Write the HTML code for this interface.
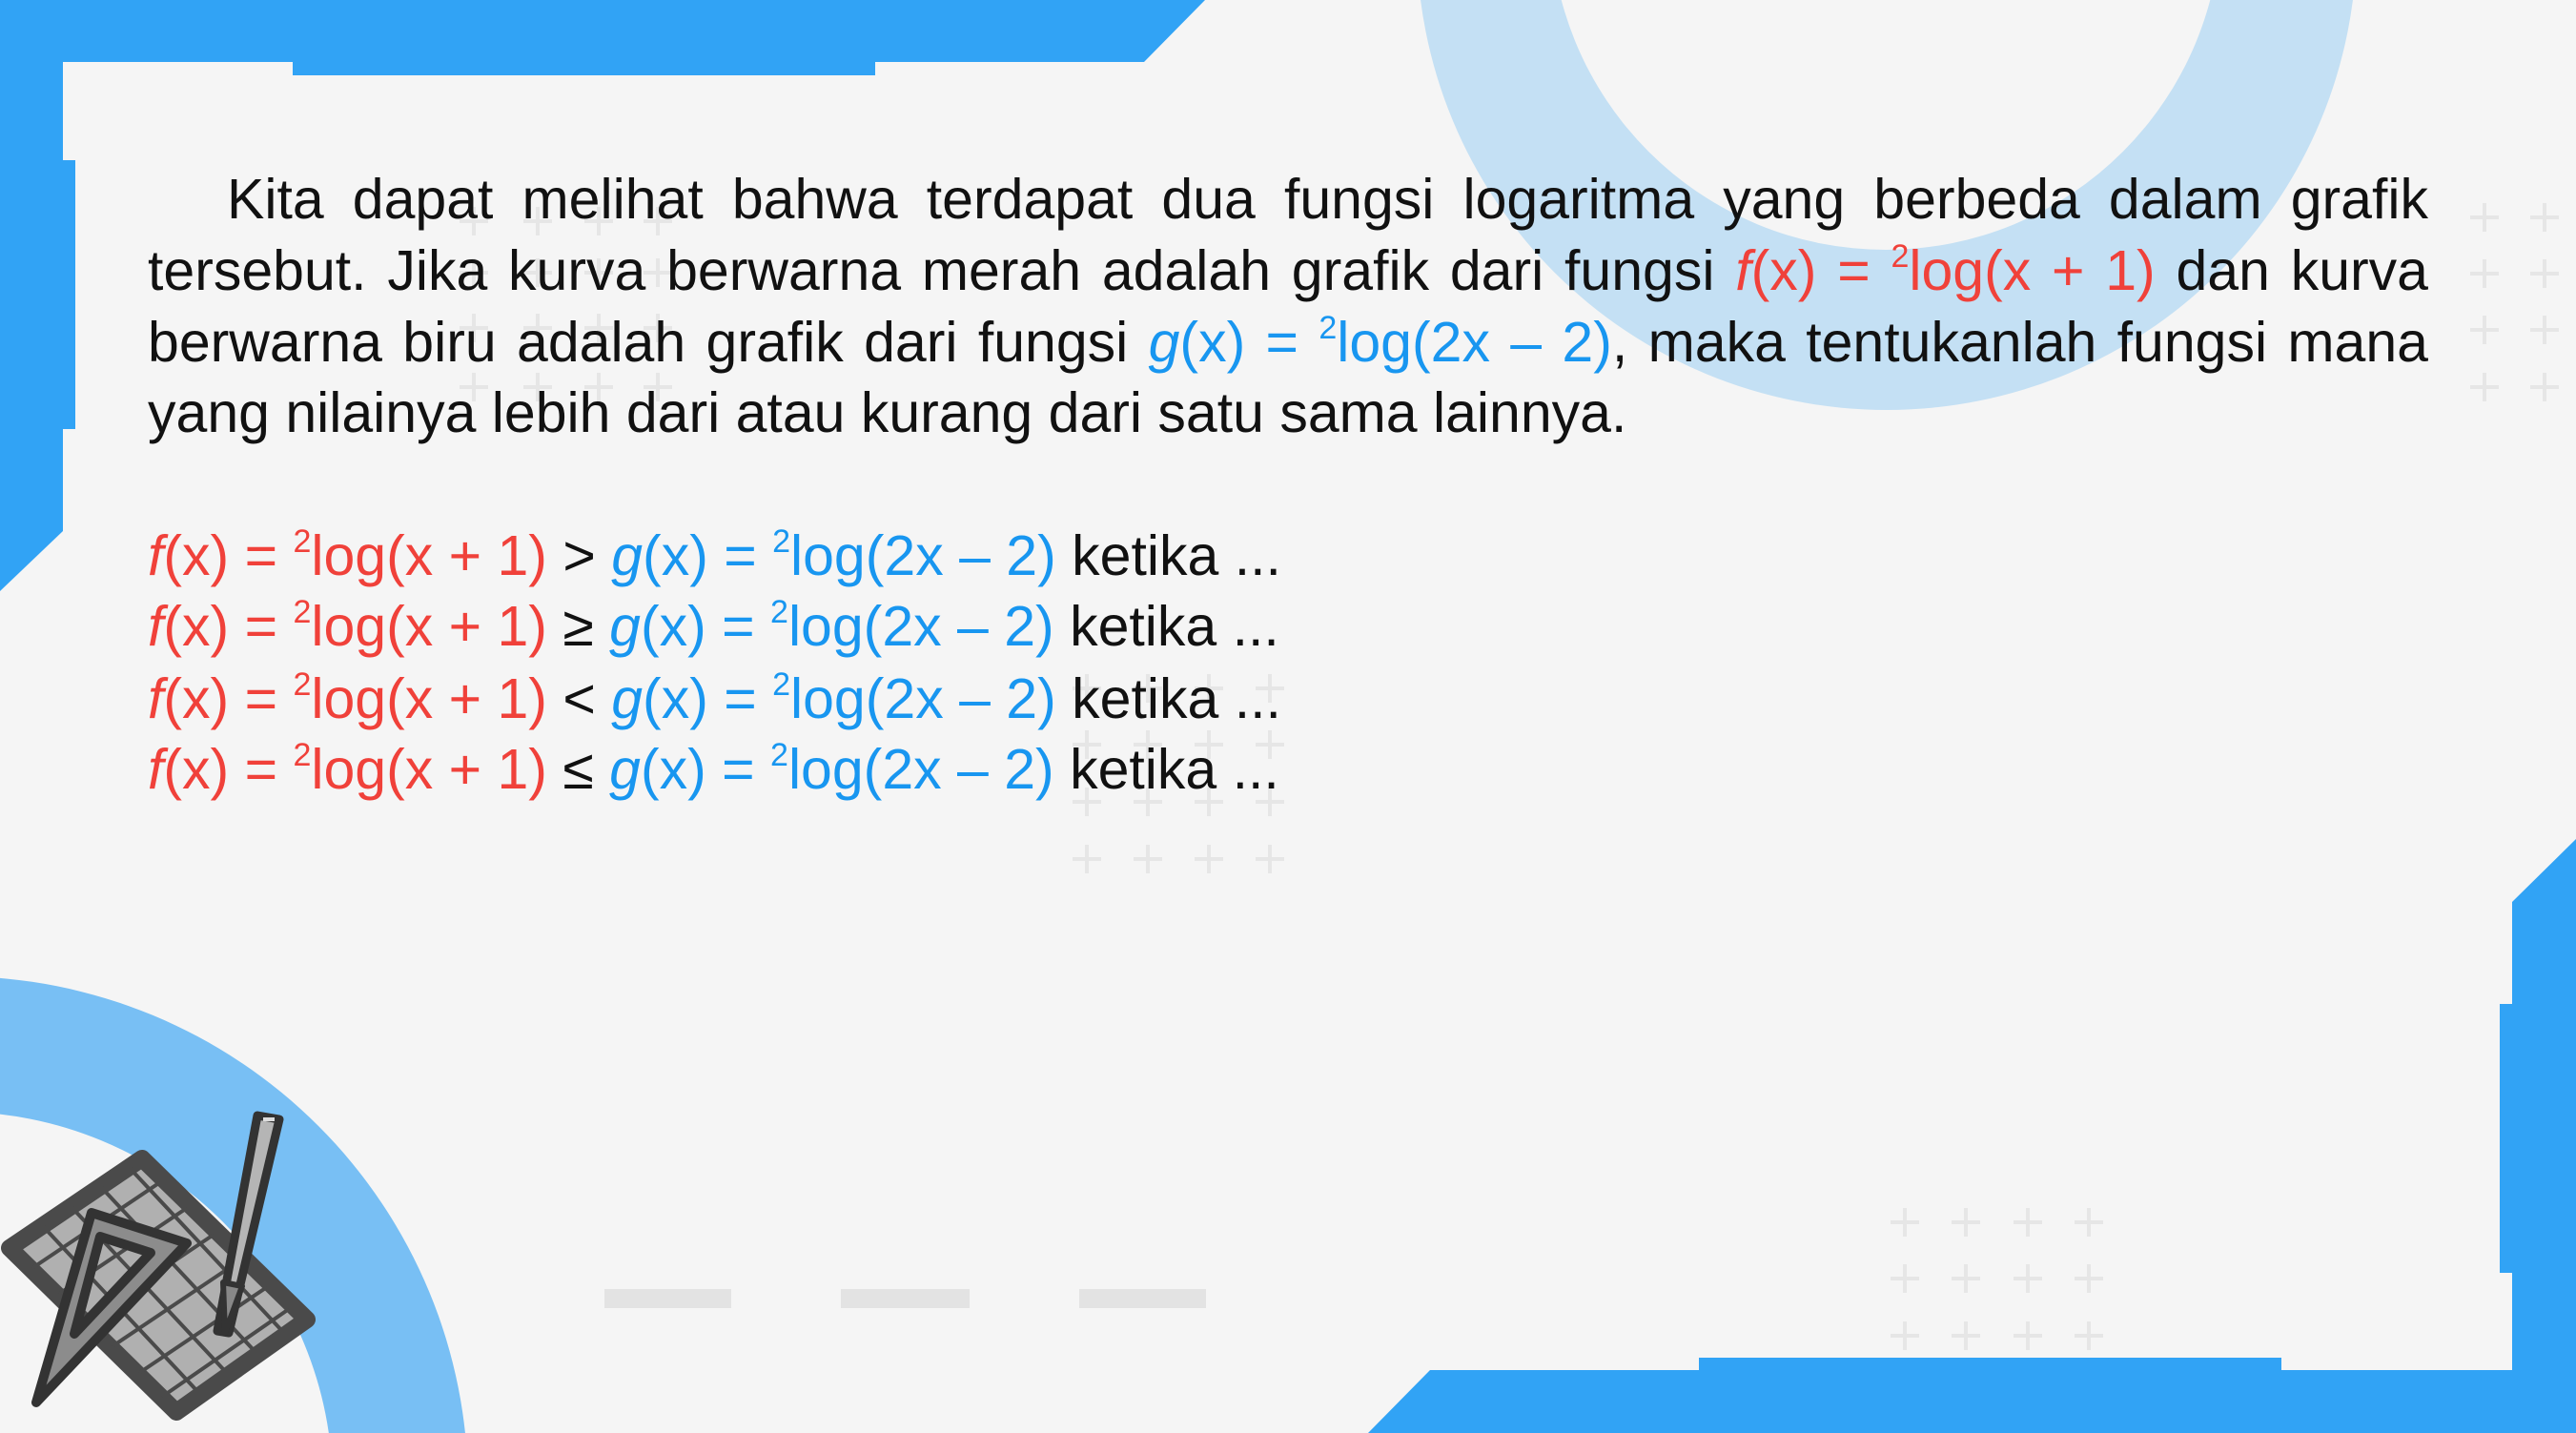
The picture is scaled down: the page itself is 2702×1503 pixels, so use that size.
<!DOCTYPE html>
<html><head><meta charset="utf-8"><style>
html,body{margin:0;padding:0}
body{width:2702px;height:1503px;position:relative;overflow:hidden;background:#f5f5f5;font-family:"Liberation Sans",sans-serif;}
svg.bg{position:absolute;left:0;top:0}
.ln{position:absolute;left:155px;font-size:59px;line-height:75px;color:#111;white-space:nowrap;transform-origin:0 0;transform:scaleX(1.0);}
.j{width:2392px;text-align:justify;text-align-last:justify;}
.r{color:#f0413a}.b{color:#1896f0}
sup{font-size:34px;vertical-align:0;position:relative;top:-24px;}
</style></head><body>
<svg class="bg" width="2702" height="1503" viewBox="0 0 2702 1503">
<path fill="#c4e0f4" fill-rule="evenodd" d="M1486 -63 A493 493 0 0 0 2472 -63 Z M1626 -90 A352 352 0 0 0 2330 -90 Z"/>
<path fill="#78bff4" fill-rule="evenodd" d="M-45 1024 A536 536 0 0 1 491 1560 L-45 1560 Z M-45 1166 A394 394 0 0 1 349 1560 L-45 1560 Z"/>
<g fill="#31a3f5">
<path d="M0 0H1264L1200 65H918V79H307V65H66V168H79V450H66V557H0Z"/>
<path d="M0 557H66L0 620Z"/>
<path d="M2702 880V1503H1435L1500 1437H1782V1424H2393V1437H2635V1335H2622V1053H2635V946Z"/>
</g>
<g fill="#e3e3e3">
<rect x="634" y="1352" width="133" height="20"/>
<rect x="882" y="1352" width="135" height="20"/>
<rect x="1132" y="1352" width="133" height="20"/>
</g>
<g stroke-linejoin="round">
<path d="M149 1215 L10 1309 L185 1481 L322 1384 Z" fill="#b0b0b0" stroke="#4a4a4a" stroke-width="18"/>
<g stroke="#4a4a4a" stroke-width="4">
<path d="M44 1285L205 1457M74 1265L235 1437M105 1244L266 1416M135 1224L296 1396"/>
<path d="M34 1330L168 1240M62 1357L196 1267M90 1385L224 1295M118 1412L252 1322M146 1440L280 1350M170 1465L303 1373"/>
</g>
<path d="M96 1272 L196 1304 L38 1471 Z M105 1297 L78 1399 L158 1314 Z" fill="#8c8c8c" fill-rule="evenodd" stroke="#333" stroke-width="10"/>
<path d="M270 1170 L293 1174 L240 1398 L228 1396 Z" fill="#b5b5b5" stroke="#333" stroke-width="9"/>
<path d="M234 1345 L254 1349 L236 1398Z" fill="#888" stroke="#333" stroke-width="6"/>
<rect x="276" y="1172" width="12" height="4" fill="#ddd"/>
</g>
<g stroke="#e6e6e6" stroke-width="4">
<path d="M497 217v30M482 232h30M564 217v30M549 232h30M628 217v30M613 232h30M690 217v30M675 232h30
M497 271v30M482 286h30M564 271v30M549 286h30M628 271v30M613 286h30M690 271v30M675 286h30
M497 329v30M482 344h30M564 329v30M549 344h30M628 329v30M613 344h30M690 329v30M675 344h30
M497 391v30M482 406h30M564 391v30M549 406h30M628 391v30M613 406h30M690 391v30M675 406h30"/>
<path d="M2606 213v30M2591 228h30M2669 213v30M2654 228h30M2606 272v30M2591 287h30M2669 272v30M2654 287h30M2606 331v30M2591 346h30M2669 331v30M2654 346h30M2606 391v30M2591 406h30M2669 391v30M2654 406h30"/>
<path d="M1140 707v30M1125 722h30M1204 707v30M1189 722h30M1268 707v30M1253 722h30M1332 707v30M1317 722h30
M1140 766v30M1125 781h30M1204 766v30M1189 781h30M1268 766v30M1253 781h30M1332 766v30M1317 781h30
M1140 826v30M1125 841h30M1204 826v30M1189 841h30M1268 826v30M1253 841h30M1332 826v30M1317 841h30
M1140 886v30M1125 901h30M1204 886v30M1189 901h30M1268 886v30M1253 901h30M1332 886v30M1317 901h30"/>
<path d="M1998 1267v30M1983 1282h30M2062 1267v30M2047 1282h30M2127 1267v30M2112 1282h30M2191 1267v30M2176 1282h30
M1998 1326v30M1983 1341h30M2062 1326v30M2047 1341h30M2127 1326v30M2112 1341h30M2191 1326v30M2176 1341h30
M1998 1386v30M1983 1401h30M2062 1386v30M2047 1401h30M2127 1386v30M2112 1401h30M2191 1386v30M2176 1401h30"/>
</g>
</svg>
<div class="ln j" style="top:172px"><span style="display:inline-block;width:83px"></span>Kita dapat melihat bahwa terdapat dua fungsi logaritma yang berbeda dalam grafik</div>
<div class="ln j" style="top:247px">tersebut. Jika kurva berwarna merah adalah grafik dari fungsi <span class="r"><i>f</i>(x) = <sup>2</sup>log(x + 1)</span> dan kurva</div>
<div class="ln j" style="top:322px">berwarna biru adalah grafik dari fungsi <span class="b"><i>g</i>(x) = <sup>2</sup>log(2x – 2)</span>, maka tentukanlah fungsi mana</div>
<div class="ln" style="top:396px">yang nilainya lebih dari atau kurang dari satu sama lainnya.</div>
<div class="ln" style="top:546px"><span class="r"><i>f</i>(x) = <sup>2</sup>log(x + 1)</span> &gt; <span class="b"><i>g</i>(x) = <sup>2</sup>log(2x – 2)</span> ketika ...</div>
<div class="ln" style="top:620px"><span class="r"><i>f</i>(x) = <sup>2</sup>log(x + 1)</span> ≥ <span class="b"><i>g</i>(x) = <sup>2</sup>log(2x – 2)</span> ketika ...</div>
<div class="ln" style="top:696px"><span class="r"><i>f</i>(x) = <sup>2</sup>log(x + 1)</span> &lt; <span class="b"><i>g</i>(x) = <sup>2</sup>log(2x – 2)</span> ketika ...</div>
<div class="ln" style="top:770px"><span class="r"><i>f</i>(x) = <sup>2</sup>log(x + 1)</span> ≤ <span class="b"><i>g</i>(x) = <sup>2</sup>log(2x – 2)</span> ketika ...</div>
</body></html>
